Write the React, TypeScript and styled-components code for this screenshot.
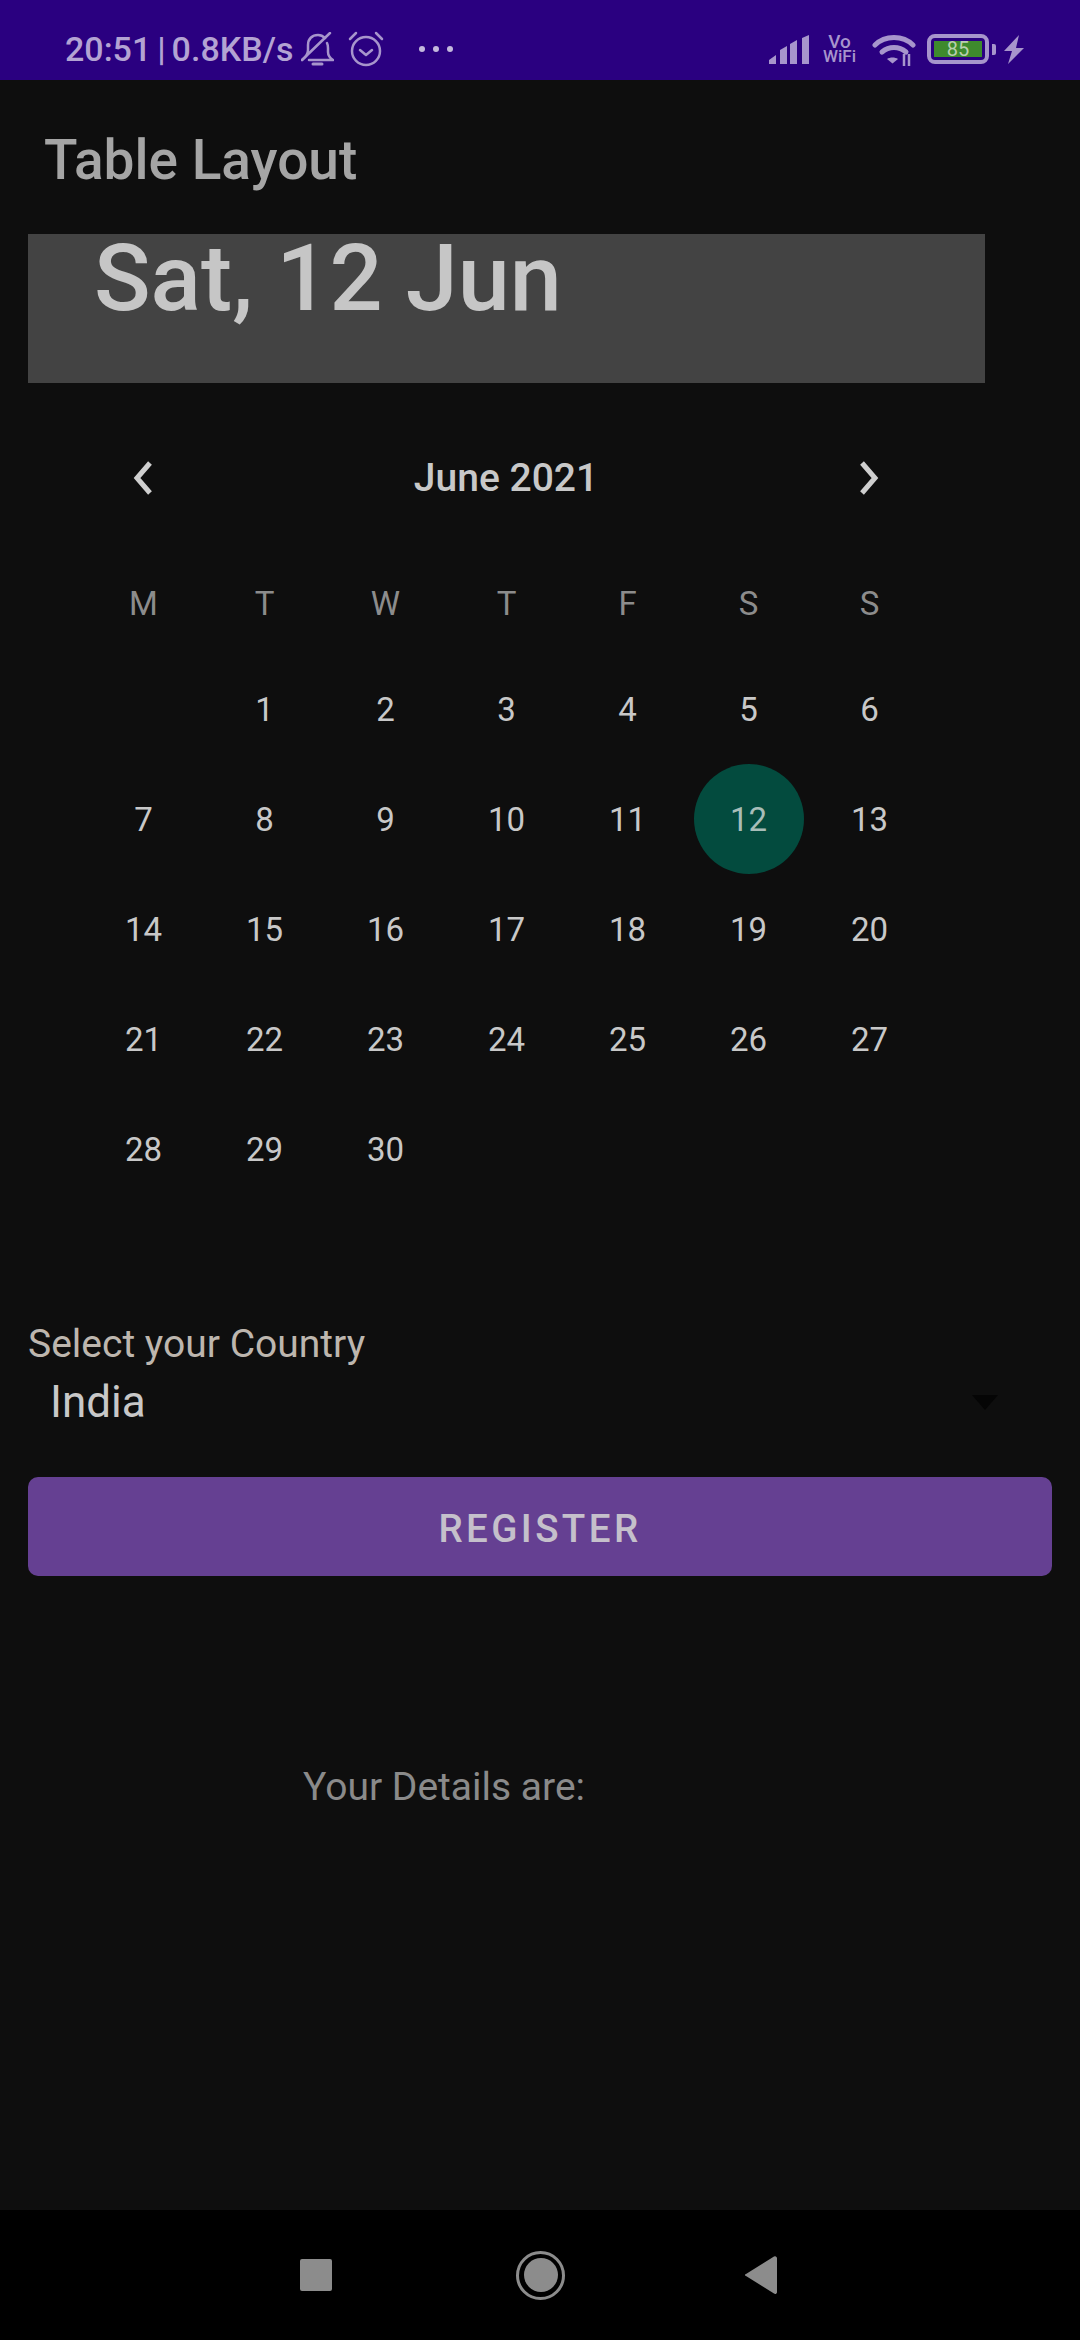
import React from "react";
import styled, { createGlobalStyle } from "styled-components";

const GlobalStyle = createGlobalStyle`
  html, body {
    margin: 0;
    padding: 0;
    background: #0e0e0e;
  }
  * {
    box-sizing: border-box;
  }
`;

const weekdays = ["M", "T", "W", "T", "F", "S", "S"];
const selectedDay = 12;
const firstDayOffset = 1;
const daysInMonth = 30;

const App = () => {
  const days = Array.from({ length: daysInMonth }, (_, i) => i + 1);

  return (
    <Page>
      <GlobalStyle />
      <StatusBar>
        <StatusLeft>
          <StatusText>20:51 | 0.8KB/s</StatusText>
          <StatusIcon width="33" height="34" viewBox="0 0 33 34" $left={8}>
            <path d="M1 28c4-3 6-6 6-10v-5C7 7 11 3 17 3c3 0 5 1 7 3M26 11c1 2 1 3 1 5v4c0 3 2 6 5 8H8" />
            <path d="M1 28 29 1" />
            <path d="M12 32h9" strokeWidth="3" />
          </StatusIcon>
          <StatusIcon width="36" height="36" viewBox="0 0 36 36" $left={14}>
            <circle cx="18" cy="20" r="14" />
            <path d="M12 19l6 5 6-5" />
            <path d="M2 8l6-6M34 8l-6-6" />
          </StatusIcon>
          <Dots>
            <Dot />
            <Dot />
            <Dot />
          </Dots>
        </StatusLeft>
        <StatusRight>
          <SignalIcon width="40" height="29" viewBox="0 0 40 29">
            <path d="M0 29v-4l7-5v9zM11 29V15l7-4v18zM21 29V9l7-4v24zM33 29V3l7-3v29z" />
          </SignalIcon>
          <VoWifi>
            <VoLine>Vo</VoLine>
            <span>WiFi</span>
          </VoWifi>
          <WifiIcon width="44" height="32" viewBox="0 0 44 32">
            <path d="M3 11C13 1 31 1 41 11" />
            <path d="M10 18c7-6 17-6 24 0" />
            <WifiDot d="M15 25c3-2 8-2 11 0l-5.500 4.500z" />
            <WifiArrows d="M32 20v12M37 20v12" />
          </WifiIcon>
          <Battery>
            <BatteryLevel>85</BatteryLevel>
          </Battery>
          <BatteryTip />
          <BoltIcon width="20" height="29" viewBox="0 0 20 29">
            <path d="M15 0 0 16h8L4 29 20 13h-8z" />
          </BoltIcon>
        </StatusRight>
      </StatusBar>

      <Toolbar>
        <Title>Table Layout</Title>
      </Toolbar>

      <DateHeader>
        <DateText>Sat, 12 Jun</DateText>
      </DateHeader>

      <MonthRow>
        <Chevron width="24" height="36" viewBox="0 0 24 36">
          <path d="M19 3 6 18l13 15" />
        </Chevron>
        <MonthName>June 2021</MonthName>
        <Chevron width="24" height="36" viewBox="0 0 24 36">
          <path d="M5 3l13 15L5 33" />
        </Chevron>
      </MonthRow>

      <WeekRow>
        {weekdays.map((d, i) => (
          <Weekday key={i}>{d}</Weekday>
        ))}
      </WeekRow>

      <DayGrid>
        {Array.from({ length: firstDayOffset }, (_, i) => (
          <span key={i} />
        ))}
        {days.map((d) => (
          <Day key={d} $selected={d === selectedDay}>
            {d}
          </Day>
        ))}
      </DayGrid>

      <CountryLabel>Select your Country</CountryLabel>
      <Spinner>
        <SpinnerValue>India</SpinnerValue>
        <SpinnerArrow />
      </Spinner>

      <RegisterButton>REGISTER</RegisterButton>

      <Details>Your Details are:</Details>

      <NavBar>
        <NavSquare />
        <NavHome>
          <NavHomeInner />
        </NavHome>
        <svg width="32" height="38" viewBox="0 0 32 38">
          <path d="M29 0.500 1 18a1 1 0 0 0 0 2l28 17.500a2 2 0 0 0 3-1V2a2 2 0 0 0-3-1.500z" fill="#8c8c8c" />
        </svg>
      </NavBar>
    </Page>
  );
};

export default App;

const Page = styled.div`
  width: 1080px;
  height: 2340px;
  display: flex;
  flex-direction: column;
  background: #0e0e0e;
  font-family: Roboto, "Liberation Sans", sans-serif;
  overflow: hidden;
`;

const StatusBar = styled.div`
  height: 80px;
  flex: none;
  display: flex;
  align-items: center;
  justify-content: space-between;
  padding: 18px 56px 0 65px;
  background: #2a0080;
`;

const StatusLeft = styled.div`
  display: flex;
  align-items: center;
`;

const StatusText = styled.span`
  font-size: 34px;
  font-weight: 500;
  word-spacing: -2.500px;
  color: #b3a3d3;
`;

const StatusIcon = styled.svg<{ $left: number }>`
  margin-left: ${(p) => p.$left}px;
  fill: none;
  stroke: #a795cc;
  stroke-width: 2.5;
  stroke-linecap: round;
  stroke-linejoin: round;
`;

const Dots = styled.div`
  display: flex;
  gap: 8px;
  margin-left: 35px;
`;

const Dot = styled.span`
  width: 6px;
  height: 6px;
  border-radius: 50%;
  background: #c4b9dd;
`;

const StatusRight = styled.div`
  display: flex;
  align-items: center;
`;

const SignalIcon = styled.svg`
  fill: #a795cc;
`;

const VoWifi = styled.div`
  display: flex;
  flex-direction: column;
  align-items: center;
  margin-left: 14px;
  font-size: 17px;
  line-height: 15px;
  font-weight: 500;
  color: #a795cc;
`;

const VoLine = styled.span`
  font-size: 19px;
`;

const WifiIcon = styled.svg`
  margin-left: 16px;
  margin-top: 2px;
  fill: none;
  stroke: #a795cc;
  stroke-width: 5;
  stroke-linecap: round;
`;

const WifiDot = styled.path`
  fill: #a795cc;
  stroke: none;
`;

const WifiArrows = styled.path`
  stroke-width: 2.5;
  stroke-linecap: butt;
`;

const Battery = styled.div`
  width: 62px;
  height: 30px;
  margin-left: 11px;
  padding: 3px;
  border: 4px solid #a795cc;
  border-radius: 8px;
  display: flex;
`;

const BatteryLevel = styled.div`
  flex: 1;
  background: #3e8a2d;
  color: #b9d0ae;
  font-size: 20px;
  line-height: 16px;
  text-align: center;
`;

const BatteryTip = styled.span`
  width: 4px;
  height: 11px;
  margin-left: 3px;
  border-radius: 0 2px 2px 0;
  background: #a795cc;
`;

const BoltIcon = styled.svg`
  margin-left: 8px;
  fill: #a795cc;
`;

const Toolbar = styled.div`
  height: 154px;
  flex: none;
  display: flex;
  align-items: center;
  padding: 6px 0 0 44px;
`;

const Title = styled.h1`
  margin: 0;
  font-size: 55px;
  font-weight: 500;
  color: #a5a5a5;
`;

const DateHeader = styled.div`
  width: 957px;
  height: 149px;
  flex: none;
  margin-left: 28px;
  padding-left: 66px;
  background: #434343;
`;

const DateText = styled.div`
  font-size: 93.5px;
  line-height: 88px;
  font-weight: 500;
  color: #c6c6c6;
`;

const MonthRow = styled.div`
  width: 726px;
  height: 100px;
  flex: none;
  margin: 45px 0 0 143px;
  display: flex;
  align-items: center;
  justify-content: space-between;
`;

const Chevron = styled.svg`
  margin: 0 -12px;
  fill: none;
  stroke: #cfcfcf;
  stroke-width: 5;
`;

const MonthName = styled.span`
  font-size: 39px;
  font-weight: 500;
  color: #c8c8c8;
`;

const WeekRow = styled.div`
  display: grid;
  grid-template-columns: repeat(7, 121px);
  height: 50px;
  flex: none;
  margin: 50px 0 26px 83px;
  align-items: center;
  justify-items: center;
`;

const Weekday = styled.span`
  font-size: 33px;
  color: #8c8c8c;
`;

const DayGrid = styled.div`
  display: grid;
  grid-template-columns: repeat(7, 121px);
  grid-auto-rows: 110px;
  flex: none;
  margin-left: 83px;
  align-items: center;
  justify-items: center;
`;

const Day = styled.span<{ $selected: boolean }>`
  width: 110px;
  height: 110px;
  display: flex;
  align-items: center;
  justify-content: center;
  border-radius: 50%;
  font-size: 33px;
  color: ${(p) => (p.$selected ? "#a8bdb8" : "#c8c8c8")};
  background: ${(p) => (p.$selected ? "#034b3e" : "transparent")};
`;

const CountryLabel = styled.div`
  margin: 117px 0 0 28px;
  flex: none;
  font-size: 39px;
  line-height: 46px;
  color: #bdb6ae;
`;

const Spinner = styled.div`
  flex: none;
  height: 68px;
  margin: 1px 0 0 28px;
  padding: 0 82px 0 22px;
  display: flex;
  align-items: center;
  justify-content: space-between;
`;

const SpinnerValue = styled.span`
  font-size: 44px;
  color: #c8c8c8;
`;

const SpinnerArrow = styled.span`
  width: 0;
  height: 0;
  border-left: 13px solid transparent;
  border-right: 13px solid transparent;
  border-top: 15px solid #050505;
`;

const RegisterButton = styled.button`
  width: 1024px;
  height: 99px;
  flex: none;
  margin: 41px 0 0 28px;
  padding: 4px 0 0;
  border: none;
  border-radius: 10px;
  background: #654092;
  color: #c5c0cb;
  font-family: inherit;
  font-size: 38.500px;
  font-weight: 500;
  letter-spacing: 3.400px;
`;

const Details = styled.div`
  flex: none;
  margin: 188px 0 0 303px;
  font-size: 39px;
  line-height: 46px;
  color: #8a8a8a;
`;

const NavBar = styled.div`
  margin-top: auto;
  height: 130px;
  flex: none;
  padding-left: 300px;
  display: flex;
  align-items: center;
  background: #000;
`;

const NavSquare = styled.span`
  width: 32px;
  height: 32px;
  border-radius: 2px;
  background: #8c8c8c;
`;

const NavHome = styled.span`
  width: 49px;
  height: 49px;
  margin: 0 180px 0 184px;
  border: 3px solid #8c8c8c;
  border-radius: 50%;
  display: flex;
  align-items: center;
  justify-content: center;
`;

const NavHomeInner = styled.span`
  width: 34px;
  height: 34px;
  border-radius: 50%;
  background: #8c8c8c;
`;
